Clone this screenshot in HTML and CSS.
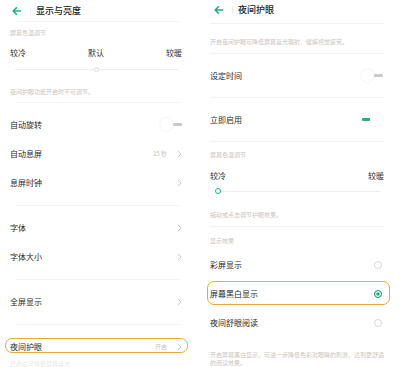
FILE: index.html
```html
<!DOCTYPE html>
<html lang="zh-CN">
<head>
<meta charset="utf-8">
<link rel="stylesheet" href="styles.css">
</head>
<body>
<div class="page">
  <section class="panel left">
    <header class="hdr">
      <svg class="back" width="9" height="8" viewBox="0 0 9 8"><path d="M8.5 4H1.2M4.4 0.8L1.2 4l3.2 3.2" fill="none" stroke="#22b17c" stroke-width="1.6" stroke-linecap="round" stroke-linejoin="round"/></svg>
      <span class="sep"></span>
      <h1 class="title">显示与亮度</h1>
    </header>
    <div class="div"></div>
    <div class="temp">
      <div class="cap">屏幕色温调节</div>
      <div class="scale"><span>较冷</span><span>默认</span><span>较暖</span></div>
      <div class="slider"><span class="trk"></span><span class="knob"></span><span class="trk"></span></div>
      <div class="cap note">夜间护眼功能开启时不可调节。</div>
    </div>
    <div class="div"></div>
    <div class="group">
      <div class="row"><span class="label">自动旋转</span><span class="tog off"><span class="kn"></span><span class="bar"></span></span></div>
      <div class="row"><span class="label">自动息屏</span><span class="val">15 秒</span><svg class="chev" width="5" height="8" viewBox="0 0 5 8"><path d="M0.8 0.8L4 4 0.8 7.2" fill="none" stroke="#c4c4c4" stroke-width="0.9"/></svg></div>
      <div class="row"><span class="label">息屏时钟</span><svg class="chev" width="5" height="8" viewBox="0 0 5 8"><path d="M0.8 0.8L4 4 0.8 7.2" fill="none" stroke="#c4c4c4" stroke-width="0.9"/></svg></div>
    </div>
    <div class="div"></div>
    <div class="group">
      <div class="row"><span class="label">字体</span><svg class="chev" width="5" height="8" viewBox="0 0 5 8"><path d="M0.8 0.8L4 4 0.8 7.2" fill="none" stroke="#c4c4c4" stroke-width="0.9"/></svg></div>
      <div class="row"><span class="label">字体大小</span><svg class="chev" width="5" height="8" viewBox="0 0 5 8"><path d="M0.8 0.8L4 4 0.8 7.2" fill="none" stroke="#c4c4c4" stroke-width="0.9"/></svg></div>
    </div>
    <div class="div"></div>
    <div class="group">
      <div class="row"><span class="label">全屏显示</span><svg class="chev" width="5" height="8" viewBox="0 0 5 8"><path d="M0.8 0.8L4 4 0.8 7.2" fill="none" stroke="#c4c4c4" stroke-width="0.9"/></svg></div>
    </div>
    <div class="div"></div>
    <div class="group last">
      <div class="row hl"><span class="label">夜间护眼</span><span class="val">开启</span><svg class="chev" width="5" height="8" viewBox="0 0 5 8"><path d="M0.8 0.8L4 4 0.8 7.2" fill="none" stroke="#c4c4c4" stroke-width="0.9"/></svg></div>
      <div class="cap tail">开启后可降低屏幕蓝光</div>
    </div>
  </section>

  <section class="panel right">
    <header class="hdr">
      <svg class="back" width="9" height="8" viewBox="0 0 9 8"><path d="M8.5 4H1.2M4.4 0.8L1.2 4l3.2 3.2" fill="none" stroke="#22b17c" stroke-width="1.6" stroke-linecap="round" stroke-linejoin="round"/></svg>
      <span class="sep"></span>
      <h1 class="title">夜间护眼</h1>
    </header>
    <div class="div top"></div>
    <div class="intro"><div class="cap">开启夜间护眼可降低屏幕蓝光辐射，缓解视觉疲劳。</div></div>
    <div class="div"></div>
    <div class="row tall"><span class="label">设定时间</span><span class="tog off"><span class="kn"></span><span class="bar"></span></span></div>
    <div class="div"></div>
    <div class="row tall"><span class="label">立即启用</span><span class="tog on"><span class="bar"></span><span class="kn"></span></span></div>
    <div class="div"></div>
    <div class="temp r">
      <div class="cap">屏幕色温调节</div>
      <div class="scale"><span>较冷</span><span>较暖</span></div>
      <div class="slider"><span class="knob g"></span><span class="trk"></span></div>
      <div class="cap note">拖动或点击调节护眼效果。</div>
    </div>
    <div class="div"></div>
    <div class="effects">
      <div class="cap">显示效果</div>
      <div class="radios">
        <div class="row"><span class="label">彩屏显示</span><span class="radio"></span></div>
        <div class="row hl"><span class="label">屏幕黑白显示</span><span class="radio sel"></span></div>
        <div class="row"><span class="label">夜间舒眼阅读</span><span class="radio"></span></div>
      </div>
      <div class="cap foot">开启屏幕黑白显示，可进一步降低色彩对眼睛的刺激，达到更舒适<br>的阅读效果。</div>
    </div>
  </section>
</div>
</body>
</html>
```
FILE: styles.css
```css
* { box-sizing: border-box; margin: 0; padding: 0; }
html, body { width: 404px; height: 367px; overflow: hidden; background: #fff; }
body { font-family: "Noto Sans CJK SC", "Noto Sans", sans-serif; color: #2b2b2b; }

.page { display: flex; gap: 6px; }
.panel { flex: none; }
.left { width: 196px; padding: 0 14px 0 10px; }
.right { width: 202px; padding: 0 20px 0 8px; }

.hdr { height: 21px; display: flex; align-items: center; }
.right .hdr { height: 20px; }
.back { margin-left: 2px; flex: none; }
.right .back { margin-left: 4px; }
.sep { width: 1px; height: 8px; background: #ececec; margin: 0 5px 0 9px; }
.title { font-size: 9px; font-weight: 500; color: #222; line-height: 12px; }

.div { height: 1px; background: #f4f4f4; margin: 0 2px 0 5px; }
.right .div { margin: 0; }
.right .div.top { margin-top: 3px; }

.cap { font-size: 6px; line-height: 8px; color: #c6c6c6; white-space: nowrap; }

.temp { padding: 7px 0 6px; }
.scale { display: flex; justify-content: space-between; font-size: 8px; line-height: 10px; margin-top: 11px; color: #333; }
.slider { height: 8px; display: flex; align-items: center; margin: 7px 4px 0 5px; }
.trk { flex: 1; height: 1px; background: #eeeeee; }
.knob { width: 5px; height: 5px; border-radius: 50%; border: 0.8px solid #dedede; background: #fff; flex: none; }
.knob.g { width: 6px; height: 6px; border: 1.5px solid #22b17c; }
.temp .note { margin-top: 15px; }

.temp.r { padding: 9px 0 7px; }
.temp.r .scale { margin-top: 12px; }
.temp.r .slider { margin: 6px 4px 0 5px; }
.temp.r .note { margin-top: 16px; }

.group { padding: 7px 0 8px; }
.group.last { padding-bottom: 0; }
.row { position: relative; display: flex; align-items: center; height: 29px; font-size: 8px; color: #2b2b2b; }
.row.tall { height: 43px; }
.label { flex: 1; }
.val { font-size: 6px; color: #c2c2c2; margin-right: 10px; }
.chev { flex: none; }

.tog { display: flex; align-items: center; flex: none; }
.kn { width: 13px; height: 13px; border-radius: 50%; background: #fff; box-shadow: 0 0 2px rgba(0,0,0,0.12); }
.bar { width: 9px; height: 2.5px; border-radius: 1px; background: #c9c9c9; }
.tog.on .bar { background: #22b17c; width: 8px; }
.right .tog { margin-right: 1px; }

.hl::after { content: ""; position: absolute; left: -5px; right: -6px; top: 6px; bottom: 8px; border: 1.5px solid #eca83a; border-radius: 7px; }
.right .hl::after { left: -3px; right: -6px; top: 2px; bottom: 3px; }

.tail { margin-top: 0; line-height: 6px; color: #e8e8e8; }

.intro { padding: 14px 0 7px; }

.effects { padding-top: 10px; }
.radios { margin-top: 5px; }
.radio { width: 8px; height: 8px; border-radius: 50%; border: 1px solid #d6d6d6; margin-right: 2px; flex: none; }
.radio.sel { border-color: #22b17c; background: #22b17c; box-shadow: inset 0 0 0 1.2px #fff; }
.foot { margin-top: 14px; line-height: 8px; }
```
